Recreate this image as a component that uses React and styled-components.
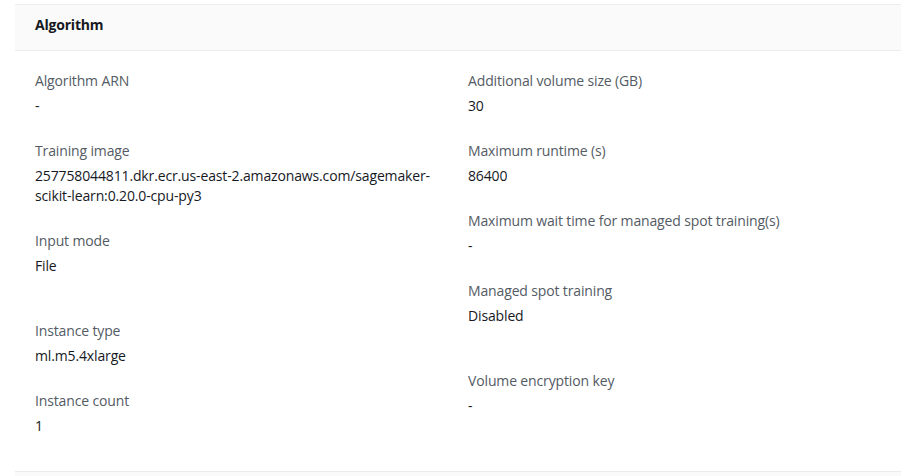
import React from "react";
import styled, { createGlobalStyle } from "styled-components";

const Global = createGlobalStyle`
  html, body { margin: 0; padding: 0; background: #ffffff; }
  body { font-family: "Open Sans", "Noto Sans", sans-serif; -webkit-font-smoothing: antialiased; }
`;

const Page = styled.div`
  padding: 4px 6px 0 15px;
  height: 476px;
  box-sizing: border-box;
  overflow: hidden;
`;

const Card = styled.section`
  border-top: 1px solid #eaeded;
  border-bottom: 1px solid #eaeded;
  background: #ffffff;
`;

const Header = styled.div`
  background: #fafafa;
  border-bottom: 1px solid #eaeded;
  padding: 10px 20px 15px;
  height: 20px;
  font-size: 14px;
  line-height: 20px;
  font-weight: 700;
  letter-spacing: -0.2px;
  color: #16191f;
`;

const Body = styled.div`
  display: grid;
  grid-template-columns: 1fr 1fr;
  column-gap: 20px;
  padding: 20px 20px 10px;
`;

const Column = styled.div`
  display: flex;
  flex-direction: column;
`;

const Item = styled.div`
  margin-bottom: ${(p) => 25 + (p.$extra || 0)}px;
`;

const Label = styled.div`
  font-size: 14px;
  line-height: 20px;
  letter-spacing: -0.14px;
  color: #545b64;
`;

const Value = styled.div`
  margin-top: 5px;
  font-size: 14px;
  line-height: 20px;
  letter-spacing: -0.14px;
  color: #16191f;
`;

const NextSection = styled.div`
  background: #fafafa;
  height: 20px;
`;

const left = [
  { label: "Algorithm ARN", value: "-" },
  {
    label: "Training image",
    value: "257758044811.dkr.ecr.us-east-2.amazonaws.com/sagemaker-scikit-learn:0.20.0-cpu-py3",
  },
  { label: "Input mode", value: "File", extra: 20 },
  { label: "Instance type", value: "ml.m5.4xlarge" },
  { label: "Instance count", value: "1" },
];

const right = [
  { label: "Additional volume size (GB)", value: "30" },
  { label: "Maximum runtime (s)", value: "86400" },
  { label: "Maximum wait time for managed spot training(s)", value: "-" },
  { label: "Managed spot training", value: "Disabled", extra: 20 },
  { label: "Volume encryption key", value: "-" },
];

function Field({ label, value, extra }) {
  return (
    <Item $extra={extra}>
      <Label>{label}</Label>
      <Value>{value}</Value>
    </Item>
  );
}

export default function App() {
  return (
    <>
      <Global />
      <Page>
        <Card>
          <Header>Algorithm</Header>
          <Body>
            <Column>
              {left.map((f) => (
                <Field key={f.label} {...f} />
              ))}
            </Column>
            <Column>
              {right.map((f) => (
                <Field key={f.label} {...f} />
              ))}
            </Column>
          </Body>
        </Card>
        <NextSection />
      </Page>
    </>
  );
}
